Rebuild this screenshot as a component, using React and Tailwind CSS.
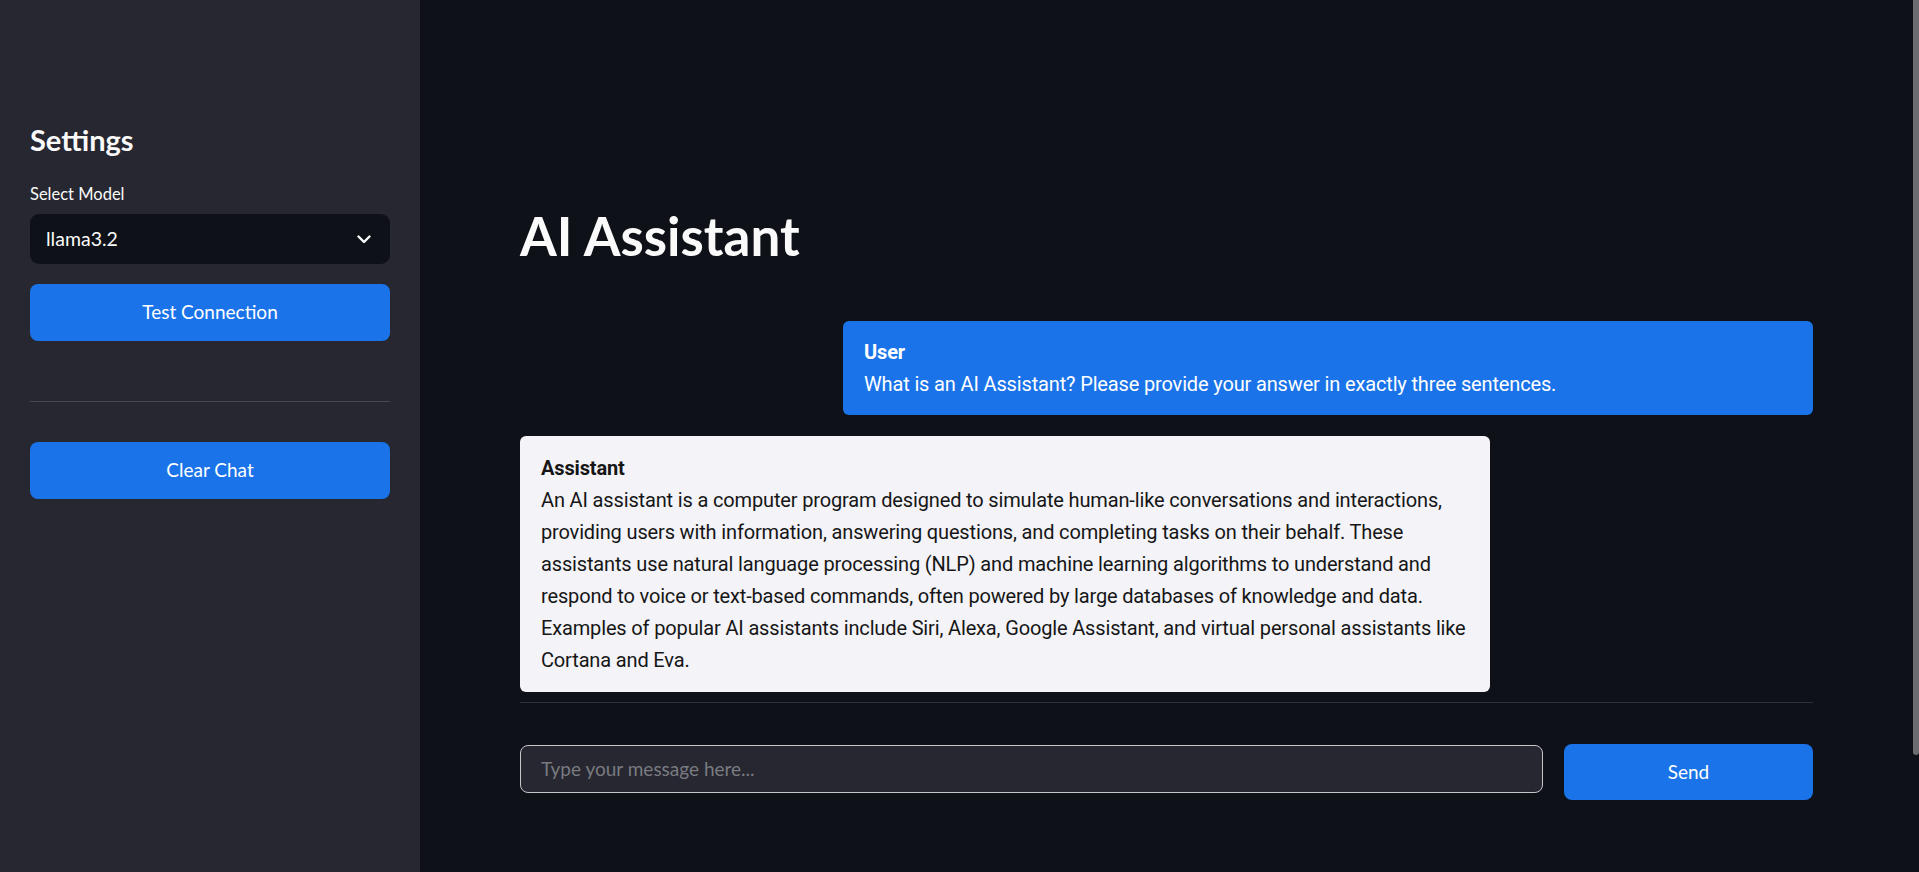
import React from "react";

const UI = { fontFamily: "Lato, 'Noto Sans', sans-serif" };
const SYS = { fontFamily: "Roboto, 'Noto Sans', sans-serif", letterSpacing: "-0.15px" };

function Chevron() {
  return (
    <svg width="14" height="9" viewBox="0 0 14 9" fill="none">
      <polyline points="1.5,1.5 7,7 12.5,1.5" stroke="#fafafa" strokeWidth="2.4" strokeLinecap="round" strokeLinejoin="round" />
    </svg>
  );
}

const answerLines = [
  "An AI assistant is a computer program designed to simulate human-like conversations and interactions,",
  "providing users with information, answering questions, and completing tasks on their behalf. These",
  "assistants use natural language processing (NLP) and machine learning algorithms to understand and",
  "respond to voice or text-based commands, often powered by large databases of knowledge and data.",
  "Examples of popular AI assistants include Siri, Alexa, Google Assistant, and virtual personal assistants like",
  "Cortana and Eva.",
];

export default function App() {
  return (
    <div className="relative flex h-[872px] w-[1919px] overflow-hidden bg-[#0e1117] text-[#fafafa]" style={UI}>
      <aside className="flex w-[420px] shrink-0 flex-col bg-[#262730] px-[30px] pt-[122px]">
        <h2 className="text-[29px] font-bold leading-[36px] text-[#fafafa]">Settings</h2>
        <div className="mt-[22px] text-[16.5px] leading-[28px] text-[#fafafa]">Select Model</div>
        <div className="mt-[6px] flex h-[50px] items-center justify-between rounded-[9px] bg-[#0e1117] pl-[16px] pr-[19px]">
          <span className="text-[19.5px] text-[#fafafa]">llama3.2</span>
          <Chevron />
        </div>
        <button className="mt-[20px] flex h-[57px] w-full items-center justify-center rounded-[8px] bg-[#1a73e8] text-[19px] text-white">
          Test Connection
        </button>
        <div className="mt-[60px] h-px w-full bg-[#46474f]" />
        <button className="mt-[40px] flex h-[57px] w-full items-center justify-center rounded-[8px] bg-[#1a73e8] text-[19px] text-white">
          Clear Chat
        </button>
      </aside>

      <main className="relative flex-1">
        <div className="ml-[100px] flex w-[1293px] flex-col pt-[203px]">
          <h1 className="text-[53px] font-bold leading-[66px] text-[#fafafa]">AI Assistant</h1>

          <div className="mt-[52px] flex flex-col">
            <div className="self-end w-[970px] rounded-[6px] bg-[#1a73e8] px-[21px] py-[15px] text-[20px] leading-[32px] text-white" style={SYS}>
              <div className="font-bold">User</div>
              <div>What is an AI Assistant? Please provide your answer in exactly three sentences.</div>
            </div>
            <div className="mt-[21px] w-[970px] rounded-[6px] bg-[#f3f3f8] px-[21px] py-[16px] text-[20px] leading-[32px] text-[#161616]" style={SYS}>
              <div className="font-bold">Assistant</div>
              <div className="whitespace-nowrap">
                {answerLines.map((l, i) => (
                  <div key={i}>{l}</div>
                ))}
              </div>
            </div>
          </div>

          <div className="mt-[10px] h-px w-full bg-[#2f3138]" />

          <div className="mt-[41px] flex items-start gap-[21px]">
            <div className="mt-px flex h-[48px] flex-1 items-center rounded-[8px] border border-[#c6c6c9] bg-[#262730] px-[20px]">
              <span className="text-[19px] text-[#7a7b80]">Type your message here...</span>
            </div>
            <button className="flex h-[56px] w-[249px] items-center justify-center rounded-[8px] bg-[#1a73e8] text-[19px] text-white">
              Send
            </button>
          </div>
        </div>

        <div className="absolute right-0 top-0 h-[755px] w-[6px] rounded-b-[3px] bg-[#6c6d70]" />
      </main>
    </div>
  );
}
